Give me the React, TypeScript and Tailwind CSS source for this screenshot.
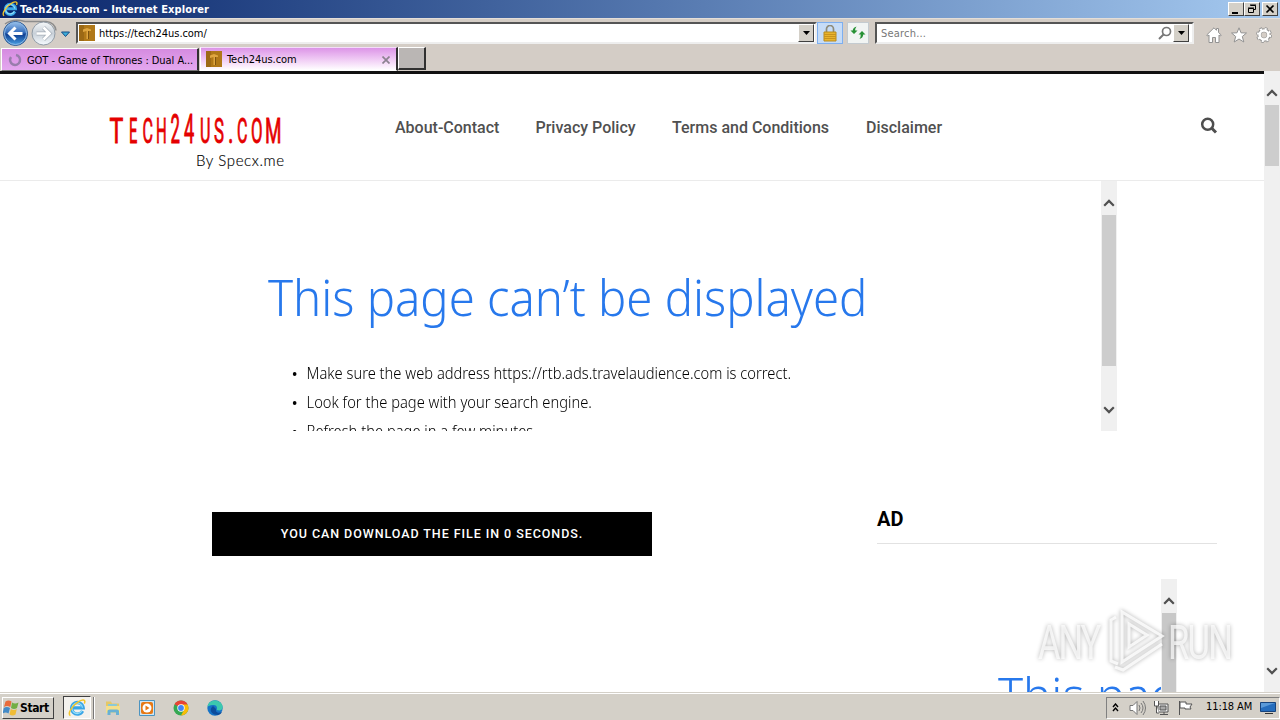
import type { ReactNode } from "react";
import clsx from "clsx";

const navLinks = [
  { label: "About-Contact", width: "w-[104.5px]" },
  { label: "Privacy Policy", width: "w-[100.5px]" },
  { label: "Terms and Conditions", width: "w-[158px]" },
  { label: "Disclaimer", width: "w-[77px]" },
];

const logoLetters = [
  { char: "T", x: 109.5, scale: "scale(.66 1)" },
  { char: "E", x: 129, scale: "scale(.42 1)" },
  { char: "C", x: 142.5, scale: "scale(.46 1)" },
  { char: "H", x: 156, scale: "scale(.43 1)" },
  { char: "2", x: 170.5, scale: "scale(.48 1.18)" },
  { char: "4", x: 184, scale: "scale(.52 1.18)" },
  { char: "U", x: 200, scale: "scale(.46 1)" },
  { char: "S", x: 214, scale: "scale(.48 1)" },
  { char: ".", x: 228, scale: "scale(.6 1)" },
  { char: "C", x: 237, scale: "scale(.46 1)" },
  { char: "O", x: 251, scale: "scale(.48 1)" },
  { char: "M", x: 265, scale: "scale(.54 1)" },
];

function InternetExplorerIcon({ className }: { className?: string }) {
  return (
    <svg viewBox="0 0 18 18" className={className}>
      <path d="M14.600 12a5.800 5.800 0 1 1 .6-3.200H5" fill="none" stroke="#3aa5e6" strokeWidth="3.300" />
      <path d="M14 11.600a5.300 5.300 0 1 1 .5-2.900" fill="none" stroke="#94dff9" strokeWidth="1.200" />
      <path d="M2.4 16.600C-1 15 4 7 9.500 3.400 14-.2 18.400.1 16.300 4.600" fill="none" stroke="#f3c52b" strokeWidth="1.500" />
    </svg>
  );
}

function SiteIcon() {
  return (
    <svg viewBox="0 0 16 16" className="size-4 shrink-0">
      <rect width="16" height="16" fill="#b07818" />
      <path d="M0 0h5v16H0z" fill="#9c6915" />
      <path d="M4 4.500l4-1.500 4 1.500v1.500H9.500v8h-2V6L4 7z" fill="#dfa640" />
      <path d="M9.500 6v8" stroke="#7d530f" />
    </svg>
  );
}

function DropButton({ className }: { className?: string }) {
  return (
    <div className={clsx("flex shrink-0 items-center justify-center border border-t-white border-l-white border-r-[#404040] border-b-[#404040] bg-[#d4d0c8]", className)}>
      <svg viewBox="0 0 7 4" className="h-1 w-[7px]">
        <path d="M0 0h7L3.500 4z" fill="#000" />
      </svg>
    </div>
  );
}

function TitleBar() {
  return (
    <div className="flex h-[18px] items-center bg-linear-to-r from-[#0a246a] to-[#a6caf0] pl-0.5 pr-0.5">
      <InternetExplorerIcon className="size-4" />
      <span className="ml-0.5 pt-px text-[11px] leading-4 font-bold tracking-[0.12px] whitespace-nowrap text-white">
        Tech24us.com - Internet Explorer
      </span>
      <div className="ml-auto flex">
        <CaptionButton>
          <path d="M3 9h6v2H3z" fill="#000" />
        </CaptionButton>
        <CaptionButton>
          <path d="M5.500 2.500h5v4h-2M5 2h6" fill="none" stroke="#000" />
          <path d="M3.500 5.500h5v4h-5zM3 5h6" fill="none" stroke="#000" />
        </CaptionButton>
        <div className="w-0.5" />
        <CaptionButton>
          <path d="M3.500 2.500l7 7M10.500 2.500l-7 7" stroke="#000" strokeWidth="1.700" />
        </CaptionButton>
      </div>
    </div>
  );
}

function CaptionButton({ children }: { children: ReactNode }) {
  return (
    <div className="h-3.5 w-4 border border-t-white border-l-white border-r-[#404040] border-b-[#404040] bg-[#d4d0c8]">
      <svg viewBox="0 0 14 12" className="h-3 w-3.5">{children}</svg>
    </div>
  );
}

function NavButtons() {
  return (
    <svg viewBox="0 0 76 29" className="h-[29px] w-[76px] shrink-0">
      <defs>
        <linearGradient id="back" x1="0" y1="0" x2="0" y2="1">
          <stop offset="0" stopColor="#9bc3ed" />
          <stop offset=".45" stopColor="#376fbd" />
          <stop offset=".55" stopColor="#114193" />
          <stop offset="1" stopColor="#4ca5e8" />
        </linearGradient>
        <linearGradient id="forward" x1="0" y1="0" x2="0" y2="1">
          <stop offset="0" stopColor="#f6f8fa" />
          <stop offset=".5" stopColor="#c8d0d8" />
          <stop offset="1" stopColor="#f6fbff" />
        </linearGradient>
      </defs>
      <path d="M5 5Q13-1 25 2.500h21q9 1 10 9" fill="none" stroke="#8d8d8d" strokeWidth="1.500" />
      <circle cx="15.500" cy="14.500" r="12" fill="url(#back)" stroke="#315c94" />
      <circle cx="15.500" cy="14.500" r="11" fill="none" stroke="#8cb9e5" />
      <circle cx="43.500" cy="14.500" r="11.500" fill="url(#forward)" stroke="#909ba6" />
      <path d="M22.500 14.500H10M15.500 8.500l-6 6 6 6" fill="none" stroke="#fff" strokeWidth="3" />
      <path d="M36.500 14.500h12M43.500 8.500l6 6-6 6" fill="none" stroke="#a3acb6" strokeWidth="4" />
      <path d="M36.500 14.500h12M43.500 8.500l6 6-6 6" fill="none" stroke="#fff" strokeWidth="2.700" />
      <path d="M61.500 13h8l-4 4.500z" fill="#3cacd8" stroke="#174d86" />
    </svg>
  );
}

function AddressBar() {
  return (
    <div className="flex h-[29px] items-start border-t border-[#e4ded8]">
      <NavButtons />
      <div className="mt-[3px] flex h-[22px] w-[741px] items-center border-2 border-t-[#555] border-l-[#555] border-r-[#eee] border-b-[#eee] bg-white pl-px">
        <SiteIcon />
        <span className="ml-1 pt-0.5 text-[11px] tracking-[-0.05px] text-black">https://tech24us.com/</span>
        <DropButton className="mr-px ml-auto h-[18px] w-4" />
      </div>
      <div className="mt-[3px] flex h-[22px] w-[26px] items-center justify-center border border-[#7daff0] bg-[#c6dcf7]">
        <svg viewBox="0 0 14 17" className="h-[17px] w-3.5">
          <path d="M3.500 8V4a3.500 3.500 0 0 1 7 0v4" fill="none" stroke="#8e8b79" strokeWidth="1.700" />
          <path d="M1 7h12v9H1z" fill="#e9b42d" stroke="#b78a1c" />
          <path d="M1 9.500h12M1 11.500h12M1 13.500h12" stroke="#c8931d" />
        </svg>
      </div>
      <div className="mt-[3px] ml-1 flex h-[22px] w-[22px] items-center justify-center border border-[#c4cbd0] bg-[#f1f4f3]">
        <svg viewBox="0 0 16 16" className="size-4">
          <path d="M4 9L.5 5.500h2.200Q3 2.500 6.500 1.500 5 3.500 5.300 5.500h2.200z" fill="#279135" />
          <path d="M12 6l3.500 3.500h-2.200q-.3 3.500-3.800 4.500 1.500-2 1.200-4.500H8.500z" fill="#279135" />
        </svg>
      </div>
      <div className="mt-[3px] ml-1.5 flex h-[22px] w-[319px] items-center border-2 border-t-[#555] border-l-[#555] border-r-[#eee] border-b-[#eee] bg-white pl-1">
        <span className="pt-0.5 text-[11px] tracking-[0.2px] text-[#777]">Search...</span>
        <svg viewBox="0 0 14 14" className="ml-auto size-3.5">
          <circle cx="8.500" cy="5.500" r="4" fill="none" stroke="#777" strokeWidth="1.700" />
          <path d="M5.500 8.500L1 13" stroke="#777" strokeWidth="2" />
        </svg>
        <DropButton className="mr-[3px] ml-px h-[18px] w-4" />
      </div>
      <div className="mt-2 ml-3 flex gap-[9px]">
        <svg viewBox="0 0 16 16" className="size-4" fill="#fff" stroke="#929292">
          <path d="M.7 8L8 .8l2.500 2.500V1.500h2v4L15.300 8l-1 1-1.300-1v7.500H9.500v-5h-3v5H3V8L1.700 9z" />
        </svg>
        <svg viewBox="0 0 16 16" className="size-4" fill="#fff" stroke="#929292">
          <path d="M8 .8l2 5 5.500.2-4.200 3.500 1.500 5.500L8 12l-4.800 3 1.500-5.500L.5 6 6 5.800z" />
        </svg>
        <svg viewBox="0 0 16 16" className="size-4">
          <circle cx="8" cy="8" r="6.300" fill="none" stroke="#919191" strokeWidth="3.200" strokeDasharray="2.500 2.448" />
          <circle cx="8" cy="8" r="4.700" fill="none" stroke="#929292" strokeWidth="4" />
          <circle cx="8" cy="8" r="6.100" fill="none" stroke="#fff" strokeWidth="2" strokeDasharray="2 2.791" />
          <circle cx="8" cy="8" r="4.400" fill="none" stroke="#fff" strokeWidth="2.500" />
        </svg>
      </div>
    </div>
  );
}

function TabBar() {
  return (
    <div className="flex h-6 items-start pl-px">
      <div className="mt-px flex h-[23px] w-[198px] items-center border border-t-white border-l-white border-r-2 border-r-[#303030] border-b-[#777] bg-linear-to-b from-[#d58be0] to-[#e4a7ef] pl-1.5">
        <svg viewBox="0 0 14 14" className="size-3.5">
          <path d="M3 4A5 5 0 1 0 8 2" fill="none" stroke="#987dac" strokeWidth="2.500" />
        </svg>
        <span className="ml-[5px] pt-[3px] text-[11px] tracking-[-0.05px] whitespace-nowrap">GOT - Game of Thrones : Dual A...</span>
      </div>
      <div className="ml-px flex h-6 w-[198px] items-center border border-t-[#f5dcfa] border-l-white border-r-2 border-r-[#303030] border-b-white bg-linear-to-b from-[#dc94e7] via-[#efc9f4] to-white pl-[5px]">
        <SiteIcon />
        <span className="ml-[5px] pt-[3px] text-[11px] tracking-[-0.05px]">Tech24us.com</span>
        <svg viewBox="0 0 8 8" className="mt-px mr-1.5 ml-auto size-2">
          <path d="M.5.500l7 7M7.500.500l-7 7" stroke="#8c8290" strokeWidth="1.700" />
        </svg>
      </div>
      <div className="h-[23px] w-7 border border-t-white border-l-white border-r-2 border-b-2 border-r-[#303030] border-b-[#303030] bg-[#bab6b4]" />
    </div>
  );
}

function Chevron({ down = false }: { down?: boolean }) {
  return (
    <svg viewBox="0 0 12 8" className={clsx("h-2 w-3 shrink-0", down && "rotate-180")}>
      <path d="M1.200 6.700L6 1.900l4.800 4.800" fill="none" stroke="#505050" strokeWidth="2.200" />
    </svg>
  );
}

function SiteHeader() {
  return (
    <header className="flex h-[107px] border-b border-[#ebebeb]">
      <svg viewBox="0 0 300 106" className="h-[106px] w-[300px] shrink-0">
        {logoLetters.map(({ char, x, scale }) => (
          <text key={x} transform={`translate(${x} 68.500) ${scale}`} fontFamily="Roboto, sans-serif" fontSize="35" fontWeight="400" fill="#e50000" stroke="#e50000" strokeWidth=".9">
            {char}
          </text>
        ))}
        <text x="196" y="92" fontFamily="Lato, sans-serif" fontSize="15" fontWeight="300" fill="#000" stroke="#000" strokeWidth=".15" textLength="88">
          By Specx.me
        </text>
      </svg>
      <nav className="mt-[42px] ml-[95px] flex h-6 gap-9 font-['Roboto',sans-serif] text-base leading-6 font-medium text-[#505050]">
        {navLinks.map((link) => (
          <a key={link.label} className={clsx("whitespace-nowrap", link.width)}>{link.label}</a>
        ))}
      </nav>
      <svg viewBox="0 0 18 18" className="mt-[43px] mr-[46px] ml-auto size-[18px]" fill="none" stroke="#4e4e4e">
        <circle cx="7.700" cy="7.200" r="5.500" strokeWidth="2.500" />
        <path d="M11.800 11.300l4.200 4.200" strokeWidth="3" />
      </svg>
    </header>
  );
}

function ErrorFrame() {
  return (
    <div className="flex h-[250px] w-[1117px] overflow-hidden">
      <div className="flex-1 pl-[268px] font-['Noto_Sans',sans-serif] font-light">
        <h1 className="mt-[81px] h-[70px] w-max origin-left scale-x-[0.945] text-[50px] leading-[70px] whitespace-nowrap text-[#2778ec]">
          This page can’t be displayed
        </h1>
        <ul className="mt-[27px] w-max origin-left scale-x-[0.919] pl-[42px] text-[16px] leading-[29px] whitespace-nowrap text-black">
          {["Make sure the web address https://rtb.ads.travelaudience.com is correct.", "Look for the page with your search engine.", "Refresh the page in a few minutes."].map((tip) => (
            <li key={tip} className="-ml-[15px] flex h-[29px] items-center">
              <span className="mr-[11px] size-1 rounded-full bg-black" />
              {tip}
            </li>
          ))}
        </ul>
      </div>
      <div className="flex w-4 flex-col items-center bg-[#f0f0f0] pt-[18px] pb-[17px]">
        <Chevron />
        <div className="mt-2 h-[151px] w-3.5 bg-[#cdcdcd]" />
        <div className="mt-auto">
          <Chevron down />
        </div>
      </div>
    </div>
  );
}

function Watermark() {
  return (
    <svg viewBox="0 0 210 80" className="absolute top-[600px] left-[1030px] h-20 w-[210px] drop-shadow-[0_0_2px_rgba(0,0,0,0.4)]">
      <g fontFamily="Roboto, sans-serif" fontSize="48" fill="#fff" fillOpacity=".72">
        <text transform="translate(8 59) scale(.72 1)" textLength="88">ANY</text>
        <text transform="translate(138 59) scale(.72 1)" textLength="90">RUN</text>
      </g>
      <path d="M92 12v50l40-26zM86 17l-5 3v41l7 3M85 67l8 3 39-26M99 24v23l18-12z" fill="none" stroke="#fff" strokeOpacity=".8" strokeWidth="3" />
    </svg>
  );
}

function Page() {
  return (
    <div className="flex h-[621px] overflow-hidden bg-white">
      <main className="h-[621px] w-[1264px] overflow-hidden border-t-[3px] border-[#111]">
        <SiteHeader />
        <ErrorFrame />
        <div className="flex">
          <div className="mt-[81px] ml-[212px] flex h-11 w-[440px] items-center justify-center bg-black font-['Roboto',sans-serif] text-[12.5px] font-medium tracking-[0.94px] text-white">
            YOU CAN DOWNLOAD THE FILE IN 0 SECONDS.
          </div>
          <aside className="mt-[74px] ml-[225px] w-[340px]">
            <h2 className="h-[39px] border-b border-[#e2e2e2] font-['Roboto',sans-serif] text-[20px] leading-[29px] font-bold text-black">AD</h2>
            <div className="mt-[35px] flex h-[114px] w-[300px] overflow-hidden">
              <div className="w-[284px] overflow-hidden pt-[81px] pl-[121px]">
                <p className="h-[70px] w-max origin-left scale-x-[0.945] font-['Noto_Sans',sans-serif] text-[50px] leading-[70px] font-light whitespace-nowrap text-[#2778ec]">
                  This page can’t be displayed
                </p>
              </div>
              <div className="flex w-4 flex-col items-center bg-[#f0f0f0] pt-[18px]">
                <Chevron />
                <div className="mt-2 h-20 w-3.5 bg-[#c8c8c8]" />
              </div>
            </div>
          </aside>
        </div>
      </main>
      <div className="flex w-4 flex-col items-center bg-[#f0f0f0] pt-[18px] pb-[17px]">
        <Chevron />
        <div className="mt-2 h-[61px] w-3.5 bg-[#cdcdcd]" />
        <div className="mt-auto">
          <Chevron down />
        </div>
      </div>
    </div>
  );
}

function Taskbar() {
  return (
    <div className="flex h-7 items-center border-t border-[#d4d0c8] bg-[#d4d0c8] pl-0.5 shadow-[inset_0_1px_0_#fff]">
      <div className="mt-0.5 flex h-[22px] w-[52px] items-center border border-t-white border-l-white border-r-[#404040] border-b-[#404040] text-[11px] font-bold">
        <svg viewBox="0 0 16 16" className="size-4">
          <path d="M2.500 1.500q3-2 6 0L7.300 7Q4 5 1 7z" fill="#e86b3c" />
          <path d="M9 2.500q3 2 6.500 0l-1.500 5.500q-3 2-6 0z" fill="#72ae45" />
          <path d="M.8 8q3-2 6.200 0l-1.500 5.500q-3-2-6 0z" fill="#438ac7" />
          <path d="M7.800 9q3 2 6 0l-1.300 5.500q-3 2-6 0z" fill="#efbc36" />
        </svg>
        <span className="ml-px text-[12px] tracking-[-0.4px]">Start</span>
      </div>
      <div className="mt-0.5 ml-[9px] flex h-[23px] w-7 items-center justify-center border border-t-[#404040] border-l-[#404040] border-white bg-[#f3f1ed]">
        <InternetExplorerIcon className="size-[18px]" />
      </div>
      <div className="mt-0.5 ml-0.5 h-[22px] w-0.5 border-r border-white bg-[#777]" />
      <div className="ml-2.5 flex items-center gap-[18px] pt-0.5">
        <svg viewBox="0 0 16 16" className="size-4">
          <path d="M1 1.500h5l1 2h7V13H1z" fill="#e5c866" />
          <path d="M3 4h9v5H3z" fill="#8bc9d7" />
          <path d="M1 6h14v7H1z" fill="#f4df8b" />
          <path d="M2.500 15v-4q0-1.500 2-1.500h7.500q2 0 2 1.500v4h-3v-2.500H5.500V15z" fill="#68b1d4" />
        </svg>
        <svg viewBox="0 0 16 16" className="size-4">
          <path d="M.5.500h15v15H.5z" fill="#cfe6f4" stroke="#4c94c1" />
          <rect x="2" y="2" width="12" height="12" rx="2" fill="#e77916" />
          <circle cx="8" cy="8" r="4.500" fill="#fff" />
          <path d="M6.500 5.500v5l4-2.500z" fill="#e77916" />
        </svg>
        <svg viewBox="0 0 16 16" className="size-4">
          <circle cx="8" cy="8" r="7.500" fill="#35a853" />
          <path d="M8 8L1.500 4.200a7.500 7.500 0 0 1 13 0z" fill="#e84336" />
          <path d="M8 4.500h6.600A7.500 7.500 0 0 1 8 15.500l3.300-6z" fill="#fbbc05" />
          <circle cx="8" cy="8" r="3.700" fill="#fff" />
          <circle cx="8" cy="8" r="2.900" fill="#4285f4" />
        </svg>
        <svg viewBox="0 0 16 16" className="size-4">
          <circle cx="8" cy="8" r="7.700" fill="#1673c7" />
          <path d="M.5 7C1-2 15-1.500 15.700 7c0 4-5 4-6 2.500 1-3-1-5-4-4.500C3 5 1 6 .5 7z" fill="#3cc9ae" />
          <path d="M6 6c-5 4-1 9 5 9 1 0 3-1 4-3-4 2-7 0-6-3z" fill="#0d4c9b" />
        </svg>
      </div>
      <div className="mt-0.5 ml-auto flex h-[22px] w-[174px] items-center border border-t-[#808080] border-l-[#808080] border-white pl-[5px]">
        <svg viewBox="0 0 7 9" className="h-[9px] w-[7px] shrink-0" fill="none" stroke="#000" strokeWidth="1.400">
          <path d="M1 4l2.500-3L6 4M1 8l2.500-3L6 8" />
        </svg>
        <svg viewBox="0 0 17 16" className="ml-2.5 h-4 w-[17px] shrink-0" fill="none" stroke="#777">
          <path d="M1 5.500h3l4-4v13l-4-4H1z" fill="#fff" />
          <path d="M10 5q2 3 0 6M12 3q4 5 0 10M14 1q5 7 0 14" />
        </svg>
        <svg viewBox="0 0 17 16" className="ml-[7px] h-4 w-[17px] shrink-0" fill="none" stroke="#555">
          <path d="M5 4h10v8H5zM7 14.500h8M11 12v2" fill="#eee" />
          <path d="M7 6h6v4H7z" fill="#aaa" />
          <path d="M1.500 1v5h4V1M3.500 6v7H6" fill="#fff" />
        </svg>
        <svg viewBox="0 0 17 16" className="ml-[7px] h-4 w-[17px] shrink-0">
          <path d="M2.500 15V1M3 2h6v2h6l-2 3 1 2H8V8H3z" fill="#fff" stroke="#555" />
        </svg>
        <span className="ml-3 text-[11px] tracking-[-0.1px] whitespace-nowrap">11:18 AM</span>
        <svg viewBox="0 0 16 14" className="mr-[3px] ml-auto h-3.5 w-4 shrink-0">
          <path d="M.5 1.500h15v9H.5z" fill="#256dbd" stroke="#17447d" />
          <path d="M1 2h14L1 7z" fill="#5a9ad9" />
          <path d="M5 12h8v1H5z" fill="#333" />
        </svg>
      </div>
    </div>
  );
}

export default function App() {
  return (
    <div className="relative flex h-[720px] w-[1280px] flex-col overflow-hidden bg-[#d4cdc6] font-['DejaVu_Sans_Condensed','DejaVu_Sans',sans-serif] text-black">
      <TitleBar />
      <AddressBar />
      <TabBar />
      <Page />
      <Taskbar />
      <Watermark />
    </div>
  );
}
